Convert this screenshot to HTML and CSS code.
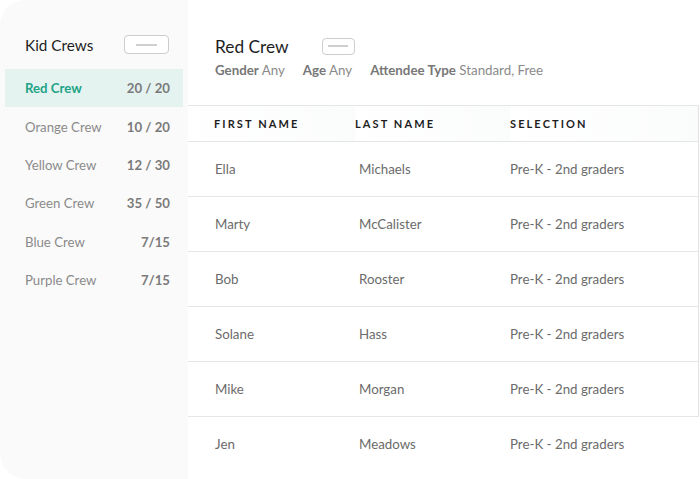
FILE: index.html
```html
<!DOCTYPE html>
<html lang="en">

<head>
    <meta charset="UTF-8">
    <meta name="viewport" content="width=device-width, initial-scale=1.0">
    <title>Kid Crews</title>
    <link rel="stylesheet" href="styles.css">
</head>

<body>
    <div class="app">
        <aside class="sidebar">
            <div class="sidebar-head">
                <h2 class="sidebar-title">Kid Crews</h2>
                <button class="menu-btn"><span></span></button>
            </div>
            <ul class="crew-list">
                <li class="crew active"><span class="crew-name">Red Crew</span><span class="crew-count">20 / 20</span></li>
                <li class="crew"><span class="crew-name">Orange Crew</span><span class="crew-count">10 / 20</span></li>
                <li class="crew"><span class="crew-name">Yellow Crew</span><span class="crew-count">12 / 30</span></li>
                <li class="crew"><span class="crew-name">Green Crew</span><span class="crew-count">35 / 50</span></li>
                <li class="crew"><span class="crew-name">Blue Crew</span><span class="crew-count">7/15</span></li>
                <li class="crew"><span class="crew-name">Purple Crew</span><span class="crew-count">7/15</span></li>
            </ul>
        </aside>

        <main class="main">
            <div class="main-head">
                <div class="title-row">
                    <h1 class="crew-title">Red Crew</h1>
                    <button class="menu-btn small"><span></span></button>
                </div>
                <div class="filters">
                    <span><b>Gender</b> Any</span>
                    <span><b>Age</b> Any</span>
                    <span><b>Attendee Type</b> Standard, Free</span>
                </div>
            </div>

            <table class="roster">
                <thead>
                    <tr>
                        <th class="col-first">First Name</th>
                        <th class="col-last">Last Name</th>
                        <th>Selection</th>
                    </tr>
                </thead>
                <tbody>
                    <tr><td class="col-first">Ella</td><td class="col-last">Michaels</td><td>Pre-K - 2nd graders</td></tr>
                    <tr><td class="col-first">Marty</td><td class="col-last">McCalister</td><td>Pre-K - 2nd graders</td></tr>
                    <tr><td class="col-first">Bob</td><td class="col-last">Rooster</td><td>Pre-K - 2nd graders</td></tr>
                    <tr><td class="col-first">Solane</td><td class="col-last">Hass</td><td>Pre-K - 2nd graders</td></tr>
                    <tr><td class="col-first">Mike</td><td class="col-last">Morgan</td><td>Pre-K - 2nd graders</td></tr>
                    <tr><td class="col-first">Jen</td><td class="col-last">Meadows</td><td>Pre-K - 2nd graders</td></tr>
                </tbody>
            </table>
        </main>
    </div>
</body>

</html>
```

FILE: styles.css
```css
* {
    margin: 0;
    padding: 0;
    box-sizing: border-box;
}

body {
    font-family: 'Lato', 'Open Sans', sans-serif;
    background: white;
    color: #222;
    overflow: hidden;
}

.app {
    display: flex;
    height: 100vh;
}

/* Sidebar */
.sidebar {
    width: 188px;
    flex-shrink: 0;
    background: #fafafa;
    border-radius: 26px 0 0 26px;
    padding: 35px 5px 0 5px;
}

.sidebar-head {
    display: flex;
    justify-content: space-between;
    align-items: center;
    padding: 0 14px 0 20px;
    height: 19px;
    margin-bottom: 15px;
}

.sidebar-title {
    font-size: 15.3px;
    font-weight: 400;
    color: #1e1e1e;
}

.menu-btn {
    width: 45px;
    height: 19px;
    border: 1px solid #cdcdcd;
    border-radius: 4px;
    background: white;
    display: flex;
    align-items: center;
    justify-content: center;
}

.menu-btn span {
    display: block;
    width: 21px;
    height: 2px;
    background: #cfcfcf;
}

.menu-btn.small {
    width: 33px;
    height: 17px;
}

.menu-btn.small span {
    width: 20px;
}

.crew-list {
    list-style: none;
}

.crew {
    display: flex;
    justify-content: space-between;
    align-items: center;
    height: 38.4px;
    padding: 0 13px 0 20px;
    font-size: 13.2px;
    color: #8a8a8a;
}

.crew-count {
    font-weight: 700;
    color: #7a7a7a;
}

.crew.active {
    background: #e5f3f0;
}

.crew.active .crew-name {
    color: #23a386;
    font-weight: 700;
}

/* Main */
.main {
    flex: 1;
    padding-top: 36px;
}

.main-head {
    padding-left: 27px;
    height: 69px;
}

.title-row {
    display: flex;
    align-items: center;
    gap: 33px;
    height: 20px;
}

.crew-title {
    font-size: 17.3px;
    font-weight: 400;
    color: #1e1e1e;
}

.filters {
    display: flex;
    gap: 18px;
    margin-top: 6px;
    font-size: 13.3px;
    color: #8a8a8a;
}

.filters b {
    font-weight: 700;
    color: #777;
}

.roster {
    width: 511px;
    border-collapse: collapse;
}

.roster th {
    height: 36px;
    text-align: left;
    font-size: 11px;
    font-weight: 700;
    letter-spacing: 2.1px;
    text-transform: uppercase;
    color: #1e1e1e;
    border-top: 1px solid #e6e6e6;
    background: linear-gradient(to right, #fff, #fafbfb);
}

.roster th.col-first {
    padding-left: 26px;
}

.roster thead tr,
.roster tbody tr {
    border-right: 1px solid #e2e2e2;
}

.roster tbody tr {
    border-top: 1px solid #e6e6e6;
}

.roster tbody tr:last-child {
    border-right: none;
}

.roster td {
    height: 55px;
    font-size: 13.3px;
    color: #6b6b6b;
}

.roster .col-first {
    width: 167px;
    padding-left: 27px;
}

.roster .col-last {
    width: 155px;
}

.roster td.col-last {
    padding-left: 4px;
}
```
